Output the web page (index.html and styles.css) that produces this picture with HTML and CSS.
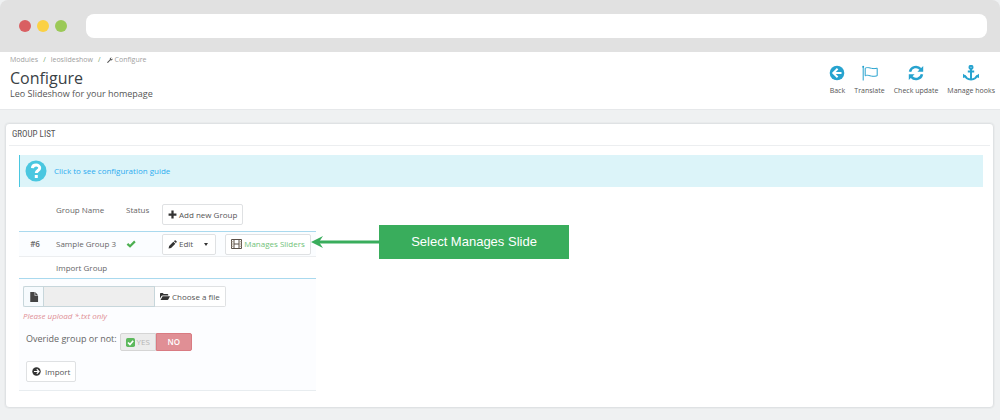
FILE: index.html
```html
<!DOCTYPE html>
<html lang="en">
<head>
    <meta charset="UTF-8">
    <meta name="viewport" content="width=device-width, initial-scale=1.0">
    <title>Configure - Leo Slideshow</title>
    <link rel="stylesheet" href="styles.css">
</head>
<body>
    <div class="browser-bar">
        <span class="dot dot-red"></span>
        <span class="dot dot-yellow"></span>
        <span class="dot dot-green"></span>
        <input type="text" class="address" aria-label="Address">
    </div>

    <header class="page-head">
        <div class="page-info">
            <nav class="breadcrumb">
                <a href="#">Modules</a>
                <span class="sep">/</span>
                <a href="#">leoslideshow</a>
                <span class="sep">/</span>
                <a href="#"><svg class="icon-wrench" viewBox="0 0 16 16"><path d="M1 13.2 7.6 6.8a4 4 0 0 1 5-5.2L10.300 4l.4 1.600 1.600.4 2.400-2.300a4 4 0 0 1-5.300 5L3 15.200a1.400 1.400 0 0 1-2-2z"/></svg>Configure</a>
            </nav>
            <h1>Configure</h1>
            <p class="subtitle">Leo Slideshow for your homepage</p>
        </div>
        <nav class="toolbar">
            <a href="#">
                <svg viewBox="0 0 16 16"><circle cx="8" cy="8" r="7.300"/><path class="hole" d="M8.600 3.700 4.300 8l4.300 4.300M4.500 8H12.500"/></svg>
                Back
            </a>
            <a href="#">
                <svg viewBox="0 0 16 16"><path class="thin" d="M1.200 2v13.500M3.200 3.200c3.500-2 5.500 1.500 12 0v7.600c-6.500 1.800-8.500-1.800-12 0z"/><circle cx="1.200" cy="1.700" r="1"/></svg>
                Translate
            </a>
            <a href="#">
                <svg viewBox="0 0 16 16"><path class="thick" d="M2 6.800a6.100 6.100 0 0 1 10.600-2.700M14 9.200A6.100 6.100 0 0 1 3.400 11.900"/><path d="M15.200 1v5.800H9.400zM.8 15V9.200h5.800z"/></svg>
                Check update
            </a>
            <a href="#">
                <svg viewBox="0 0 16 16"><circle class="mid" cx="8" cy="2.300" r="1.500"/><path class="mid" d="M8 4v10.500M4.800 6.500h6.400M1.800 10.500c.8 2.500 3.400 3.700 6.200 4.100 2.800-.4 5.400-1.600 6.200-4.100"/><path d="M0 13V8.800L4 11.500zM16 13V8.800L12 11.500z"/></svg>
                Manage hooks
            </a>
        </nav>
    </header>

    <main class="panel">
        <h2>GROUP LIST</h2>
        <div class="panel-body">
            <div class="alert">
                <svg viewBox="0 0 22 22"><circle cx="11" cy="11" r="10.500"/><path class="mark" d="M7.400 8.200c.3-4.200 7.400-4 7.300-.2 0 2.600-3.400 2.500-3.400 5"/><path class="stop" d="M9.800 15h3v3h-3z"/></svg>
                <a href="#">Click to see configuration guide</a>
            </div>

            <div class="table-wrap">
                <table class="group-table">
                    <colgroup>
                        <col class="col-id">
                        <col class="col-name">
                        <col class="col-status">
                        <col>
                    </colgroup>
                    <thead>
                        <tr>
                            <th></th>
                            <th>Group Name</th>
                            <th>Status</th>
                            <th class="cell-actions">
                                <button type="button" class="btn"><svg viewBox="0 0 16 16"><path d="M6 1h4v5h5v4h-5v5H6v-5H1V6h5z"/></svg>Add new Group</button>
                            </th>
                        </tr>
                    </thead>
                    <tbody>
                        <tr class="group-row">
                            <td class="group-id">#6</td>
                            <td>Sample Group 3</td>
                            <td><svg class="icon-check" viewBox="0 0 16 16"><path d="M1 9 3.500 6.200 6.400 9 13 2.500 15.500 5 6.500 14z"/></svg></td>
                            <td class="cell-actions">
                                <div class="actions">
                                    <div class="btn-group">
                                        <button type="button" class="btn"><svg viewBox="0 0 16 16"><path d="M1 15l1-4.500 7.500-7.500L13 6.500 5.500 14zM10.500 2l1.300-1.200a1.300 1.300 0 0 1 1.800 0l1.600 1.600a1.300 1.300 0 0 1 0 1.800L14 5.500z"/></svg>Edit</button>
                                        <button type="button" class="btn btn-caret" aria-label="More"><span class="caret"></span></button>
                                    </div>
                                    <button type="button" class="btn btn-slides"><svg class="icon-film" viewBox="0 0 22 20"><path d="M1 1h20v18H1zM6 1v18M16 1v18M6 10h10"/><path class="holes" d="M1 5.500h5M1 10h5M1 14.500h5M16 5.500h5M16 10h5M16 14.500h5"/></svg>Manages Sliders</button>
                                </div>
                            </td>
                        </tr>
                        <tr class="import-head">
                            <td></td>
                            <td colspan="3">Import Group</td>
                        </tr>
                        <tr>
                            <td colspan="4" class="import-cell">
                                <form class="import-form">
                                    <div class="file-row">
                                        <label class="addon" for="import-file" aria-label="File"><svg viewBox="0 0 16 16"><path d="M2 0h7v6h5.500v10H2zM10 0l4.500 5H10z"/></svg></label>
                                        <input type="text" id="import-file" class="file-name" readonly>
                                        <button type="button" class="btn"><svg class="icon-folder" viewBox="0 0 20 16"><path d="M0 12V2.500C0 1.500.7 1 1.500 1h4L7.500 3H15c.8 0 1.500.6 1.500 1.500V6H5C4 6 3.300 6.500 2.800 7.200zM5.200 7.500H20L16.500 14c-.3.600-.8 1-1.500 1H1z"/></svg>Choose a file</button>
                                    </div>
                                    <p class="help">Please upload *.txt only</p>
                                    <div class="override-row">
                                        <span class="override-label">Overide group or not:</span>
                                        <div class="switch">
                                            <input type="radio" name="override" id="override-yes">
                                            <label for="override-yes" class="yes"><svg viewBox="0 0 16 16"><rect width="16" height="16" rx="3"/><path d="M3.500 8 7 11.500 12.800 5"/></svg>YES</label>
                                            <input type="radio" name="override" id="override-no" checked>
                                            <label for="override-no" class="no">NO</label>
                                        </div>
                                    </div>
                                    <button type="button" class="btn btn-import"><svg viewBox="0 0 16 16"><circle cx="8" cy="8" r="7.500"/><path class="hole" d="M3.500 8H12M8.500 4l4 4-4 4"/></svg>Import</button>
                                </form>
                            </td>
                        </tr>
                    </tbody>
                </table>

                <div class="callout">
                    <svg viewBox="0 0 68 14"><path d="M8 5.500H68v3H8z"/><path d="M0 7 12 1 8 7l4 6z"/></svg>
                    <span>Select Manages Slide</span>
                </div>
            </div>
        </div>
    </main>
</body>
</html>
```

FILE: styles.css
```css
* {
    box-sizing: border-box;
}

html {
    background: #fff;
}

body {
    margin: 0;
    min-height: 100vh;
    background: #eff1f2;
    color: #666;
    font-family: "Open Sans", "Noto Sans", sans-serif;
    font-size: 8px;
    line-height: 12px;
}

a {
    text-decoration: none;
}

button,
input {
    font-family: inherit;
    font-size: inherit;
    line-height: inherit;
}

/* Browser bar */
.browser-bar {
    display: flex;
    align-items: center;
    gap: 6px;
    height: 52px;
    padding: 0 13px 0 19px;
    background: #e1e1e1;
    border-radius: 8px 8px 0 0;
}

.dot {
    width: 12px;
    height: 12px;
    border-radius: 50%;
}

.dot-red {
    background: #d95f62;
}

.dot-yellow {
    background: #fbd144;
}

.dot-green {
    background: #9bc957;
}

.address {
    flex: 1;
    height: 24px;
    margin-left: 13px;
    padding: 0 8px;
    border: none;
    border-radius: 8px;
    background: #fff;
}

/* Page header */
.page-head {
    display: flex;
    justify-content: space-between;
    padding: 2px 5px 9px 10px;
    background: #fff;
    border-bottom: 1px solid #e6e8ea;
}

.breadcrumb {
    display: flex;
    gap: 5px;
    font-size: 7px;
}

.breadcrumb a {
    color: #a0a0a0;
}

.breadcrumb .sep {
    color: #72a36b;
}

.icon-wrench {
    width: 6px;
    height: 6px;
    margin: 0 2px 0 1px;
    vertical-align: middle;
    fill: #555;
}

h1 {
    margin: 2px 0 0;
    color: #3a4145;
    font-size: 16px;
    font-weight: 400;
    line-height: 20px;
}

.subtitle {
    margin: 0;
    color: #555;
    font-size: 9px;
}

.toolbar {
    display: flex;
    gap: 9px;
    padding-top: 11px;
    font-size: 7px;
}

.toolbar a {
    display: flex;
    flex-direction: column;
    align-items: center;
    gap: 4px;
    color: #555;
}

.toolbar svg {
    width: 16px;
    height: 16px;
    fill: #27a3cf;
}

.toolbar .hole,
.toolbar .thin,
.toolbar .mid,
.toolbar .thick {
    fill: none;
    stroke: #27a3cf;
}

.toolbar .hole {
    stroke: #fff;
    stroke-width: 2;
}

.toolbar .mid {
    stroke-width: 2;
}

.toolbar .thick {
    stroke-width: 2.5;
}

/* Panel */
.panel {
    margin: 13px 6px 12px 5px;
    padding: 0 3px 16px;
    background: #fff;
    border: 1px solid #dfe2e4;
    border-radius: 4px;
    box-shadow: 0 0 0 1px #e9ebec;
}

h2 {
    margin: 0;
    padding: 4px 3px 5px;
    border-bottom: 1px solid #eceef0;
    color: #555;
    font-family: "Roboto Condensed", Roboto, sans-serif;
    font-size: 9px;
    font-weight: 400;
}

.panel-body {
    padding: 9px 7px 0 10px;
}

.alert {
    display: flex;
    align-items: center;
    gap: 7px;
    height: 32px;
    padding-left: 5px;
    border-left: 1px solid #4ac7e0;
    background: #dcf4f9;
}

.alert svg {
    width: 22px;
    height: 22px;
    fill: #4ac7e0;
}

.alert .mark {
    fill: none;
    stroke: #fff;
    stroke-width: 3;
}

.alert .stop {
    fill: #fff;
}

.alert a {
    color: #2eacf0;
}

/* Group table */
.table-wrap {
    position: relative;
    width: 297px;
    margin-top: 12px;
}

.group-table {
    width: 100%;
    table-layout: fixed;
    border-collapse: separate;
    border-spacing: 0;
    border-bottom: 1px solid #e8edf0;
}

.col-id {
    width: 32px;
}

.col-name {
    width: 70px;
}

.col-status {
    width: 41px;
}

th,
td {
    padding: 0 5px;
    font-weight: 400;
    text-align: left;
    white-space: nowrap;
}

thead th {
    height: 33px;
    padding-top: 5px;
    border-bottom: 1px solid #a9d9ee;
    vertical-align: top;
}

.group-row td {
    height: 25px;
    border-bottom: 1px solid #eceef0;
    background: #fbfdff;
}

.group-table .group-id {
    font-weight: 600;
    text-align: center;
}

.group-table .cell-actions {
    padding-left: 0;
    padding-right: 0;
}

.import-head td {
    height: 22px;
    border-bottom: 1px solid #a9d9ee;
}

.icon-check {
    display: block;
    width: 10px;
    height: 10px;
    fill: #4caf50;
}

.actions {
    display: flex;
    gap: 9px;
}

/* Buttons */
.btn {
    display: inline-flex;
    align-items: center;
    gap: 2px;
    height: 21px;
    padding: 0 5px;
    border: 1px solid #dfe1e3;
    border-radius: 2px;
    background: #fff;
    color: #555;
    white-space: nowrap;
    cursor: pointer;
}

.btn svg {
    width: 9px;
    height: 9px;
    fill: #333;
}

.btn-group {
    display: flex;
    border: 1px solid #dfe1e3;
    border-radius: 2px;
    background: #fff;
}

.btn-group .btn {
    height: 19px;
    border: none;
}

.btn-group .btn-caret {
    padding: 0 7px 0 6px;
}

.caret {
    border: 2px solid transparent;
    border-top: 3px solid #333;
    border-bottom: none;
}

.btn-slides {
    color: #72c279;
}

.btn .icon-film {
    width: 11px;
    height: 10px;
    fill: none;
    stroke: #5a5048;
    stroke-width: 2;
}

.icon-film .holes {
    stroke: #a89c8c;
}

.btn .icon-folder {
    width: 10px;
}

/* Import form */
.group-table .import-cell {
    padding: 7px 4px 8px;
    background: #fcfdff;
}

.import-form {
    display: flex;
    flex-direction: column;
    align-items: flex-start;
}

.file-row {
    display: flex;
}

.addon {
    display: flex;
    align-items: center;
    justify-content: center;
    width: 20px;
    border: 1px solid #c7d6db;
    border-right: none;
    border-radius: 2px 0 0 2px;
    background: #f6fafd;
}

.addon svg {
    width: 10px;
    height: 10px;
    fill: #444;
}

.file-name {
    width: 112px;
    height: 21px;
    padding: 0 4px;
    border: 1px solid #c7d6db;
    background: #eee;
}

.file-row .btn {
    border-left: none;
    border-radius: 0 2px 2px 0;
}

.help {
    margin: 3px 0 0;
    color: #e08f95;
    font-style: italic;
}

.override-row {
    display: flex;
    gap: 3px;
    margin: 11px 0 10px 3px;
}

.override-label {
    font-size: 9px;
}

.switch {
    display: flex;
    position: relative;
    height: 18px;
}

.switch input {
    position: absolute;
    margin: 0;
    opacity: 0;
}

.switch label {
    display: flex;
    align-items: center;
    justify-content: center;
    gap: 2px;
    width: 36px;
    border: 1px solid #d5d5d5;
    border-radius: 2px 0 0 2px;
    background: #ececec;
    color: #b5b5b5;
}

.switch .no {
    border-color: #d97b82;
    border-radius: 0 2px 2px 0;
    background: #e08f95;
    color: #fff;
    font-weight: 600;
}

.switch svg {
    width: 9px;
    height: 9px;
    fill: #5cb85c;
}

.switch path {
    fill: none;
    stroke: #fff;
    stroke-width: 3;
}

.btn-import {
    gap: 4px;
    margin-left: 3px;
}

.btn-import .hole {
    fill: none;
    stroke: #fff;
    stroke-width: 2;
}

/* Callout pointing at the slider button */
.callout {
    position: absolute;
    top: 26px;
    left: 292px;
    display: flex;
    align-items: center;
}

.callout svg {
    width: 68px;
    height: 14px;
    fill: #39ad5c;
}

.callout span {
    width: 190px;
    background: #39ad5c;
    color: #fff;
    font-family: "Liberation Sans", sans-serif;
    font-size: 13px;
    line-height: 34px;
    text-align: center;
    white-space: nowrap;
}
```
